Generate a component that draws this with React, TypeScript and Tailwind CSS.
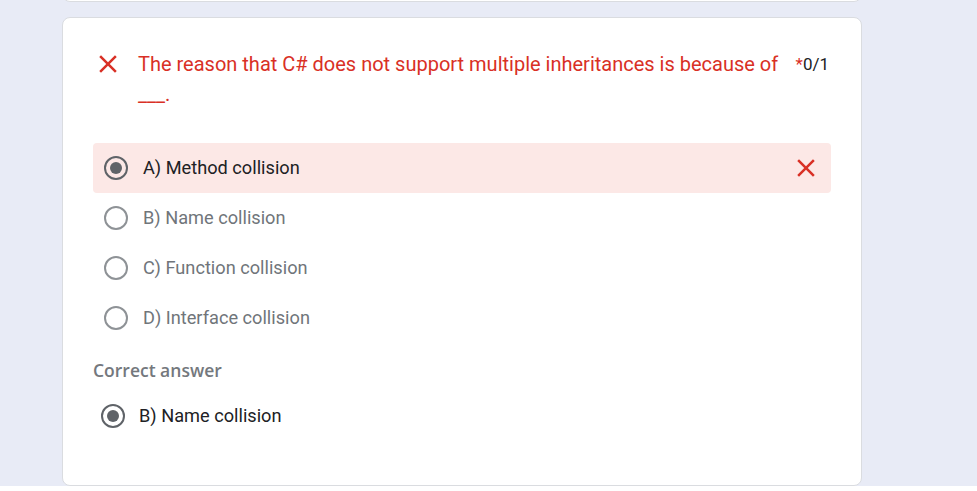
import React from 'react'

const options = ['A) Method collision', 'B) Name collision', 'C) Function collision', 'D) Interface collision']

function CloseIcon({ className }: { className?: string }) {
  return (
    <svg viewBox="0 0 24 24" className={className} fill="#d93025">
      <path d="M19 6.41 17.59 5 12 10.59 6.41 5 5 6.41 10.59 12 5 17.59 6.41 19 12 13.41 17.59 19 19 17.59 13.41 12z" />
    </svg>
  )
}

function Radio({ checked, light }: { checked?: boolean; light?: boolean }) {
  return (
    <span
      className={`flex h-[24px] w-[24px] shrink-0 items-center justify-center rounded-full border-2 ${
        light ? 'border-[#8e9296]' : 'border-[#5f6368]'
      }`}
    >
      {checked && <span className="h-[12px] w-[12px] rounded-full bg-[#5f6368]" />}
    </span>
  )
}

export default function App() {
  const chosen = 0

  return (
    <div className="min-h-screen bg-[#e8ebf6] font-['Roboto',sans-serif]">
      <div className="ml-[62px] w-[800px]">
        <div className="-mt-[8px] h-[10px] rounded-b-lg border border-[#dadce0] bg-white" />

        <div className="mt-[15px] h-[469px] rounded-lg border border-[#dadce0] bg-white px-[30px] pt-[31px]">
          <div className="flex items-start">
            <CloseIcon className="h-[30px] w-[30px] shrink-0" />
            <p className="ml-[15px] flex-1 text-[20px] leading-[30px] text-[#d93025]">
              The reason that C# does not support multiple inheritances is because of ___.
            </p>
            <span className="ml-[16px] mr-[2px] text-[17px] leading-[30px] text-[#202124]">
              <span className="text-[#d93025]">*</span>0/1
            </span>
          </div>

          <div className="mt-[34px] flex flex-col">
            {options.map((opt, i) =>
              i === chosen ? (
                <div key={opt} className="flex h-[50px] items-center rounded bg-[#fce8e6] pl-[11px] pr-[10px]">
                  <Radio checked />
                  <span className="ml-[15px] flex-1 text-[18.2px] text-[#202124]">{opt}</span>
                  <CloseIcon className="h-[30px] w-[30px]" />
                </div>
              ) : (
                <div key={opt} className="flex h-[50px] items-center pl-[11px]">
                  <Radio light />
                  <span className="ml-[15px] text-[18.2px] text-[#70757a]">{opt}</span>
                </div>
              )
            )}
          </div>

          <div className="mt-[15px] font-['Open_Sans',sans-serif] text-[17.5px] font-semibold leading-[24px] text-[#74787d]">
            Correct answer
          </div>
          <div className="mt-[10px] flex h-[48px] items-center pl-[8px]">
            <Radio checked />
            <span className="ml-[14px] text-[18.2px] text-[#202124]">B) Name collision</span>
          </div>
        </div>
      </div>
    </div>
  )
}
